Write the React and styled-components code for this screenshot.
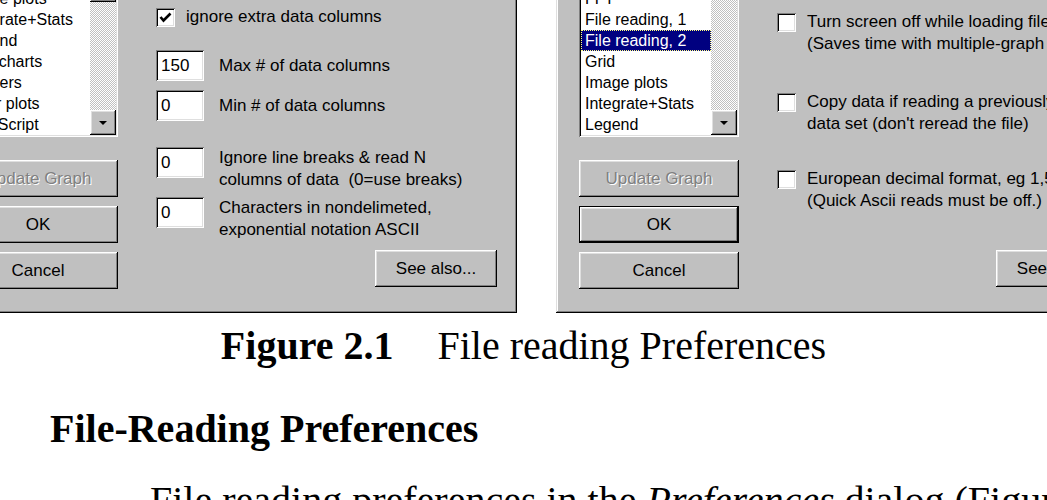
import React from "react";
import styled, { createGlobalStyle, css } from "styled-components";

const GlobalStyle = createGlobalStyle`
  html, body {
    margin: 0;
    padding: 0;
    background: #ffffff;
    overflow: hidden;
  }
  body {
    font-family: "Liberation Serif", "Times New Roman", serif;
    color: #000000;
  }
`;

// classic 3D bevels
const raised = css`
  background: #c0c0c0;
  box-shadow: inset -1px -1px #000000, inset 1px 1px #ffffff,
    inset -2px -2px #808080, inset 2px 2px #dfdfdf;
`;

const sunken = css`
  background: #ffffff;
  box-shadow: inset 1px 1px #808080, inset -1px -1px #ffffff,
    inset 2px 2px #000000, inset -2px -2px #dfdfdf;
`;

const Page = styled.div`
  width: 1047px;
  height: 500px;
  overflow: hidden;
  background: #ffffff;
`;

const FigureStrip = styled.div`
  height: 314px;
  overflow: hidden;
  display: flex;
  gap: 39px;
`;

const Dialog = styled.div`
  flex: none;
  box-sizing: border-box;
  width: 582px;
  height: 393px;
  margin-top: -80px;
  padding: 10px 20px 0 23px;
  display: grid;
  grid-template-columns: 160px 1fr;
  column-gap: 38px;
  background: #c0c0c0;
  box-shadow: inset -1px -1px #000000, inset 1px 1px #dfdfdf,
    inset -2px -2px #808080, inset 2px 2px #ffffff;
  font-family: "Liberation Sans", Arial, sans-serif;
  font-size: 17px;
  color: #000000;

  &:first-child {
    margin-left: -65px;
  }
`;

const SideColumn = styled.div`
  display: flex;
  flex-direction: column;
`;

const ListBox = styled.div`
  ${sunken};
  box-sizing: border-box;
  height: 207px;
  padding: 2px;
  display: flex;
  margin-bottom: 23px;
`;

const ListItems = styled.ul`
  flex: 1;
  min-width: 0;
  margin: 0;
  padding: 0;
  list-style: none;
  display: flex;
  flex-direction: column;
  justify-content: flex-end;
  overflow: hidden;
  font-size: 16px;
`;

const ListItem = styled.li`
  flex: none;
  height: 21px;
  line-height: 21px;
  padding-left: 4px;
  white-space: nowrap;

  ${(p) =>
    p.$selected &&
    css`
      background: #000080;
      color: #ffffff;
      outline: 1px dotted #ffff80;
      outline-offset: -1px;
    `}
`;

const ScrollBar = styled.div`
  flex: none;
  width: 26px;
  display: flex;
  flex-direction: column;
  background: repeating-conic-gradient(#c0c0c0 0% 25%, #ffffff 0% 50%) 0 0 / 2px 2px;
`;

const ScrollButton = styled.div`
  ${raised};
  flex: none;
  height: 25px;
  display: flex;
  align-items: center;
  justify-content: center;
`;

const Arrow = styled.span`
  width: 0;
  height: 0;
  border-left: 4px solid transparent;
  border-right: 4px solid transparent;
  ${(p) =>
    p.$up
      ? css`
          border-bottom: 4px solid #000000;
        `
      : css`
          border-top: 4px solid #000000;
        `}
`;

const Thumb = styled.div`
  ${raised};
  flex: none;
  height: 25px;
  margin-top: ${(p) => p.$offset}px;
`;

const Trough = styled.div`
  flex: 1;
`;

const PushButton = styled.button`
  ${raised};
  border: none;
  margin: 0;
  padding: 0;
  height: 37px;
  width: ${(p) => (p.$width ? `${p.$width}px` : "100%")};
  display: flex;
  align-items: center;
  justify-content: center;
  font: inherit;
  color: #000000;

  & + & {
    margin-top: 9px;
  }

  ${(p) =>
    p.$disabled &&
    css`
      color: #808080;
      text-shadow: 1px 1px #ffffff;
    `}

  ${(p) =>
    p.$default &&
    css`
      box-shadow: inset 0 0 0 1px #000000, inset -2px -2px #000000,
        inset 2px 2px #ffffff, inset -3px -3px #808080, inset 3px 3px #dfdfdf;
    `}
`;

const Options = styled.div`
  min-width: 0;
  display: flex;
  flex-direction: column;
  padding-top: ${(p) => p.$lead}px;
  padding-bottom: 26px;
`;

const OptionRow = styled.div`
  display: flex;
  align-items: flex-start;
  margin-top: ${(p) => p.$space || 0}px;
  white-space: nowrap;
`;

const CheckBox = styled.span`
  ${sunken};
  flex: none;
  width: 19px;
  height: 19px;
  margin: 2px 11px 0 0;
  display: flex;
  align-items: center;
  justify-content: center;
`;

const NumberField = styled.span`
  ${sunken};
  flex: none;
  box-sizing: border-box;
  width: 48px;
  height: 31px;
  margin-right: 15px;
  padding: 1px 5px 0;
  display: flex;
  align-items: center;
`;

const Label = styled.span`
  line-height: 22px;
  padding-top: ${(p) => p.$pad || 0}px;
`;

const FooterButton = styled(PushButton)`
  margin-top: auto;
  align-self: flex-end;
`;

const Caption = styled.p`
  margin: 9px 0 0;
  text-align: center;
  font-size: 40px;
  line-height: 46px;
  white-space: nowrap;
`;

const CaptionText = styled.span`
  margin-left: 44px;
`;

const Heading = styled.h2`
  margin: 37px 0 0 50px;
  font-size: 40px;
  line-height: 46px;
  font-weight: bold;
  white-space: nowrap;
`;

const Paragraph = styled.p`
  margin: 26px 0 0 50px;
  text-indent: 100px;
  font-size: 40px;
  line-height: 46px;
  white-space: nowrap;
`;

const Check = () => (
  <svg width="13" height="13" viewBox="0 0 13 13">
    <polyline
      points="1.5,6 4.5,9.5 11.5,2.5"
      fill="none"
      stroke="#000"
      strokeWidth="2.6"
    />
  </svg>
);

const sections = [
  "Axes",
  "Contour plots",
  "Error bars",
  "FFT",
  "File reading, 1",
  "File reading, 2",
  "Grid",
  "Image plots",
  "Integrate+Stats",
  "Legend",
  "Line charts",
  "Markers",
  "Polar plots",
  "Run Script",
];

const PrefsDialog = ({ shownUntil, selected, thumb, defaultOk, lead, children }) => (
  <Dialog>
    <SideColumn>
      <ListBox>
        <ListItems>
          {sections.slice(0, shownUntil + 1).map((name) => (
            <ListItem key={name} $selected={name === selected}>
              {name}
            </ListItem>
          ))}
        </ListItems>
        <ScrollBar>
          <ScrollButton>
            <Arrow $up />
          </ScrollButton>
          <Thumb $offset={thumb} />
          <Trough />
          <ScrollButton>
            <Arrow />
          </ScrollButton>
        </ScrollBar>
      </ListBox>
      <PushButton $disabled>Update Graph</PushButton>
      <PushButton $default={defaultOk}>OK</PushButton>
      <PushButton>Cancel</PushButton>
    </SideColumn>
    <Options $lead={lead}>
      {children}
      <FooterButton $width={122}>See also...</FooterButton>
    </Options>
  </Dialog>
);

export default function App() {
  return (
    <Page>
      <GlobalStyle />
      <FigureStrip>
        <PrefsDialog shownUntil={13} selected="File reading, 1" thumb={20} lead={76}>
          <OptionRow>
            <CheckBox>
              <Check />
            </CheckBox>
            <Label>ignore extra data columns</Label>
          </OptionRow>
          <OptionRow $space={22}>
            <NumberField>150</NumberField>
            <Label $pad={5}>Max # of data columns</Label>
          </OptionRow>
          <OptionRow $space={9}>
            <NumberField>0</NumberField>
            <Label $pad={5}>Min # of data columns</Label>
          </OptionRow>
          <OptionRow $space={26}>
            <NumberField>0</NumberField>
            <Label>
              Ignore line breaks &amp; read N
              <br />
              columns of data&nbsp; (0=use breaks)
            </Label>
          </OptionRow>
          <OptionRow $space={6}>
            <NumberField>0</NumberField>
            <Label>
              Characters in nondelimeted,
              <br />
              exponential notation ASCII
            </Label>
          </OptionRow>
        </PrefsDialog>

        <PrefsDialog shownUntil={9} selected="File reading, 2" thumb={0} lead={81} defaultOk>
          <OptionRow>
            <CheckBox />
            <Label>
              Turn screen off while loading files
              <br />
              (Saves time with multiple-graph files)
            </Label>
          </OptionRow>
          <OptionRow $space={36}>
            <CheckBox />
            <Label>
              Copy data if reading a previously read
              <br />
              data set (don't reread the file)
            </Label>
          </OptionRow>
          <OptionRow $space={33}>
            <CheckBox />
            <Label>
              European decimal format, eg 1,5 = 1.5
              <br />
              (Quick Ascii reads must be off.)
            </Label>
          </OptionRow>
        </PrefsDialog>
      </FigureStrip>

      <Caption>
        <b>Figure 2.1</b>
        <CaptionText>File reading Preferences</CaptionText>
      </Caption>
      <Heading>File-Reading Preferences</Heading>
      <Paragraph>
        File reading preferences in the <i>Preferences</i> dialog (Figure 2.1)
      </Paragraph>
    </Page>
  );
}
